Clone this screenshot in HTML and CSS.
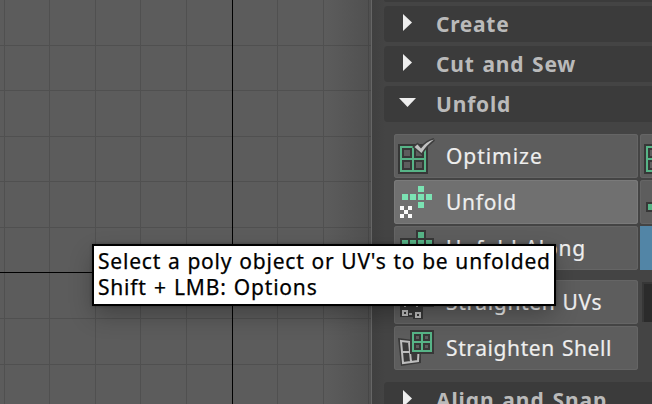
FILE: index.html
```
<!DOCTYPE html>
<html lang="en">
<head>
<meta charset="utf-8">
<title>UV Toolkit</title>
<link rel="stylesheet" href="styles.css">
</head>
<body>
<div class="app">
  <main class="viewport">
    <svg class="grid" width="371" height="404" shape-rendering="crispEdges">
      <path class="minor" d="M4.5 0V404M49.5 0V404M95.5 0V404M140.5 0V404M186.5 0V404M277.5 0V404M323.5 0V404M368.5 0V404M0 45.5H371M0 90.5H371M0 136.5H371M0 181.5H371M0 227.5H371M0 318.5H371M0 364.5H371"/>
      <path class="axis" d="M232.5 0V404M0 272.5H371"/>
    </svg>
  </main>
  <aside class="panel">
    <div class="section-head section-head-prev"></div>
    <div class="section-head"><svg class="arrow" width="18" height="18"><path d="M5 0L14 8.5L5 17Z"/></svg><span class="t-create">Create</span></div>
    <div class="section-head"><svg class="arrow" width="18" height="18"><path d="M5 0L14 8.5L5 17Z"/></svg><span class="t-cut">Cut and Sew</span></div>
    <div class="section-head"><svg class="arrow" width="18" height="18"><path d="M1 4H18L9.5 13Z"/></svg><span class="t-unfold">Unfold</span></div>
    <div class="tools">
      <div class="row">
        <div class="tool">
          <svg class="icon" viewBox="394 134 44 44">
            <path fill="#373737" d="M398 144H428V174H398Z"/>
            <path fill="none" stroke="#57b487" stroke-width="2" d="M401 147H425V171H401ZM413 147V171M401 159H425"/>
            <path fill="#5d5d5d" d="M404 150H410V156H404ZM416 150H422V156H416ZM404 162H410V168H404ZM416 162H422V168H416Z"/>
            <path fill="#c1c1c1" stroke="#3d3d3d" stroke-width="3" paint-order="stroke" d="M414.500 147L417.500 144.500L421 148.500Q426 141.500 434 139.500Q426.500 145 421.500 153Z"/>
          </svg><span class="t-opt">Optimize</span>
        </div>
        <div class="tool tool-cut"><svg class="icon" viewBox="640 134 44 44"><path fill="#373737" d="M644 144H670V174H644Z"/><path fill="none" stroke="#57b487" stroke-width="2" d="M670 147H647V171H670M647 159H670"/><path fill="#5d5d5d" d="M650 150H656V156H650ZM650 162H656V168H650Z"/></svg></div>
      </div>
      <div class="row">
        <div class="tool tool-hover">
          <svg class="icon" viewBox="394 180 44 44">
            <path fill="#7be3b3" d="M418 186H424V192H418ZM402 194H408V200H402ZM410 194H416V200H410ZM418 194H424V200H418ZM426 194H432V200H426ZM418 202H424V208H418Z"/>
            <path fill="#fafafa" d="M400 206H404V210H400ZM408 206H412V210H408ZM404 210H408V214H404ZM400 214H404V218H400ZM408 214H412V218H408Z"/>
          </svg><span class="t-un">Unfold</span>
        </div>
        <div class="tool tool-cut"><svg class="icon" viewBox="640 180 44 44"><path fill="#373737" d="M646 202H656V212H646Z"/><path fill="#57b487" d="M648 204H654V210H648Z"/></svg></div>
      </div>
      <div class="row">
        <div class="tool">
          <svg class="icon" viewBox="394 226 44 44">
            <path fill="#373737" d="M416 230H426V238H434V248H426V256H400V238H416Z"/>
            <path fill="#57b487" d="M418 232H424V238H418ZM402 240H408V246H402ZM410 240H416V246H410ZM418 240H424V246H418ZM426 240H432V246H426Z"/>
          </svg><span class="t-along">Unfold Along</span>
        </div>
        <div class="tool tool-active"></div>
      </div>
      <div class="row row-gap">
        <div class="tool">
          <svg class="icon" viewBox="394 280 44 44">
            <path fill="#373737" d="M400 298H434V307H423V319H413V317H400Z"/>
            <path fill="none" stroke="#bdbdbd" stroke-width="2" d="M403 311H407V315H403ZM416 313H420V317H416Z"/>
            <path fill="#a5a5a5" d="M409 313H412V315H409ZM404 304H406V307H404ZM416 304H418V307H416Z"/>
          </svg><span class="t-uvs">Straighten UVs</span>
        </div>
        <div class="field"></div>
      </div>
      <div class="row">
        <div class="tool">
          <svg class="icon" viewBox="394 326 44 44">
            <path fill="#3a3a3a" d="M398 338L421 341V363L401 366Z"/>
            <path fill="none" stroke="#bdbdbd" stroke-width="2" d="M401 341L419 343L418 361L403 363ZM409 342L411 362M402 352H418"/>
            <path fill="#373737" d="M410 330H434V354H410Z"/>
            <path fill="#5d5d5d" d="M416 336H419V339H416ZM425 336H428V339H425ZM416 345H419V348H416ZM425 345H428V348H425Z"/>
            <path fill="none" stroke="#57b487" stroke-width="2" d="M413 333H431V351H413ZM422 333V351M413 342H431"/>
          </svg><span class="t-shell">Straighten Shell</span>
        </div>
      </div>
    </div>
    <div class="section-head section-head-next"><svg class="arrow" width="18" height="18"><path d="M5 0L14 8.5L5 17Z"/></svg><span class="t-align">Align and Snap</span></div>
  </aside>
  <div class="tooltip" role="tooltip">
    <div class="tip-1">Select a poly object or UV's to be unfolded</div>
    <div class="tip-2">Shift + LMB: Options</div>
  </div>
</div>
</body>
</html>
```
FILE: styles.css
```
* { box-sizing: border-box; }
body {
  margin: 0;
  overflow: hidden;
  font-family: "Noto Sans", "Open Sans", sans-serif;
  font-size: 21px;
}
.app {
  position: relative;
  display: flex;
  width: 652px;
  height: 404px;
  overflow: hidden;
  background: #444;
}
.viewport {
  width: 373px;
  flex: none;
  background: linear-gradient(90deg, #5c5c5c 325px, #505050 371px);
  border-right: 1px solid #404040;
}
.grid { display: block; border-right: 1px solid #666; width: 372px; }
.minor { stroke: rgba(0, 0, 0, .12); fill: none; }
.axis { stroke: #000; fill: none; }
.panel {
  flex: 1;
  min-width: 0;
  padding-left: 11px;
  background: linear-gradient(90deg, #404040, #444 12px);
}
.section-head {
  display: flex;
  align-items: center;
  height: 36px;
  margin-bottom: 4px;
  padding-left: 14px;
  border-radius: 4px 0 0 4px;
  background: #3b3b3b;
  color: #bababa;
  font-weight: 700;
  line-height: 36px;
  white-space: nowrap;
}
.section-head-prev { height: 2px; border-radius: 0 0 0 4px; }
.section-head-next { margin-top: 12px; }
.arrow { flex: none; margin-right: 20px; margin-top: -3px; fill: #eee; }
.t-create { letter-spacing: .7px; }
.t-cut { letter-spacing: .8px; word-spacing: 1.5px; }
.t-unfold { letter-spacing: .8px; }
.t-align { letter-spacing: .9px; word-spacing: 1.5px; }
.t-opt { letter-spacing: .95px; }
.t-un { letter-spacing: .7px; }
.t-along { letter-spacing: .8px; word-spacing: 1px; }
.t-uvs { letter-spacing: .65px; word-spacing: 1px; }
.t-shell { letter-spacing: .6px; word-spacing: 1px; }
.tools { padding: 8px 0 0 10px; }
.row { display: flex; gap: 2px; height: 44px; margin-bottom: 2px; }
.row-gap { margin-top: 10px; }
.tools .row:last-child { margin-bottom: 0; }
.tool {
  display: flex;
  flex: none;
  width: 244px;
  height: 44px;
  border-radius: 3px;
  background: #5d5d5d;
  box-shadow: inset 0 0 0 1px #656565;
  color: #eee;
  line-height: 44px;
  white-space: nowrap;
  -webkit-text-stroke: .2px;
}
.tool-hover { background: #707070; box-shadow: inset 0 0 0 1px #7a7a7a; }
.tool-cut { width: 44px; }
.tool-active { width: 44px; background: #5285a6; box-shadow: none; border-radius: 0; }
.field { width: 44px; height: 40px; margin: 2px 0 0 2px; background: #2b2b2b; border: 2px solid #373737; border-width: 2px 0 0 2px; }
.icon { flex: none; width: 44px; height: 44px; margin-right: 8px; }
.tooltip {
  position: absolute;
  left: 92px;
  top: 244px;
  width: 464px;
  height: 62px;
  padding: 2px 4px;
  border: 2px solid #000;
  background: #fff;
  color: #000;
  line-height: 26px;
  white-space: nowrap;
  -webkit-text-stroke: .25px;
  box-shadow: 0 10px 24px -2px rgba(0, 0, 0, .3), 0 0 3px rgba(0, 0, 0, .3);
}
.tip-1 { letter-spacing: .8px; word-spacing: .6px; }
.tip-2 { letter-spacing: .8px; word-spacing: 1px; }
```
